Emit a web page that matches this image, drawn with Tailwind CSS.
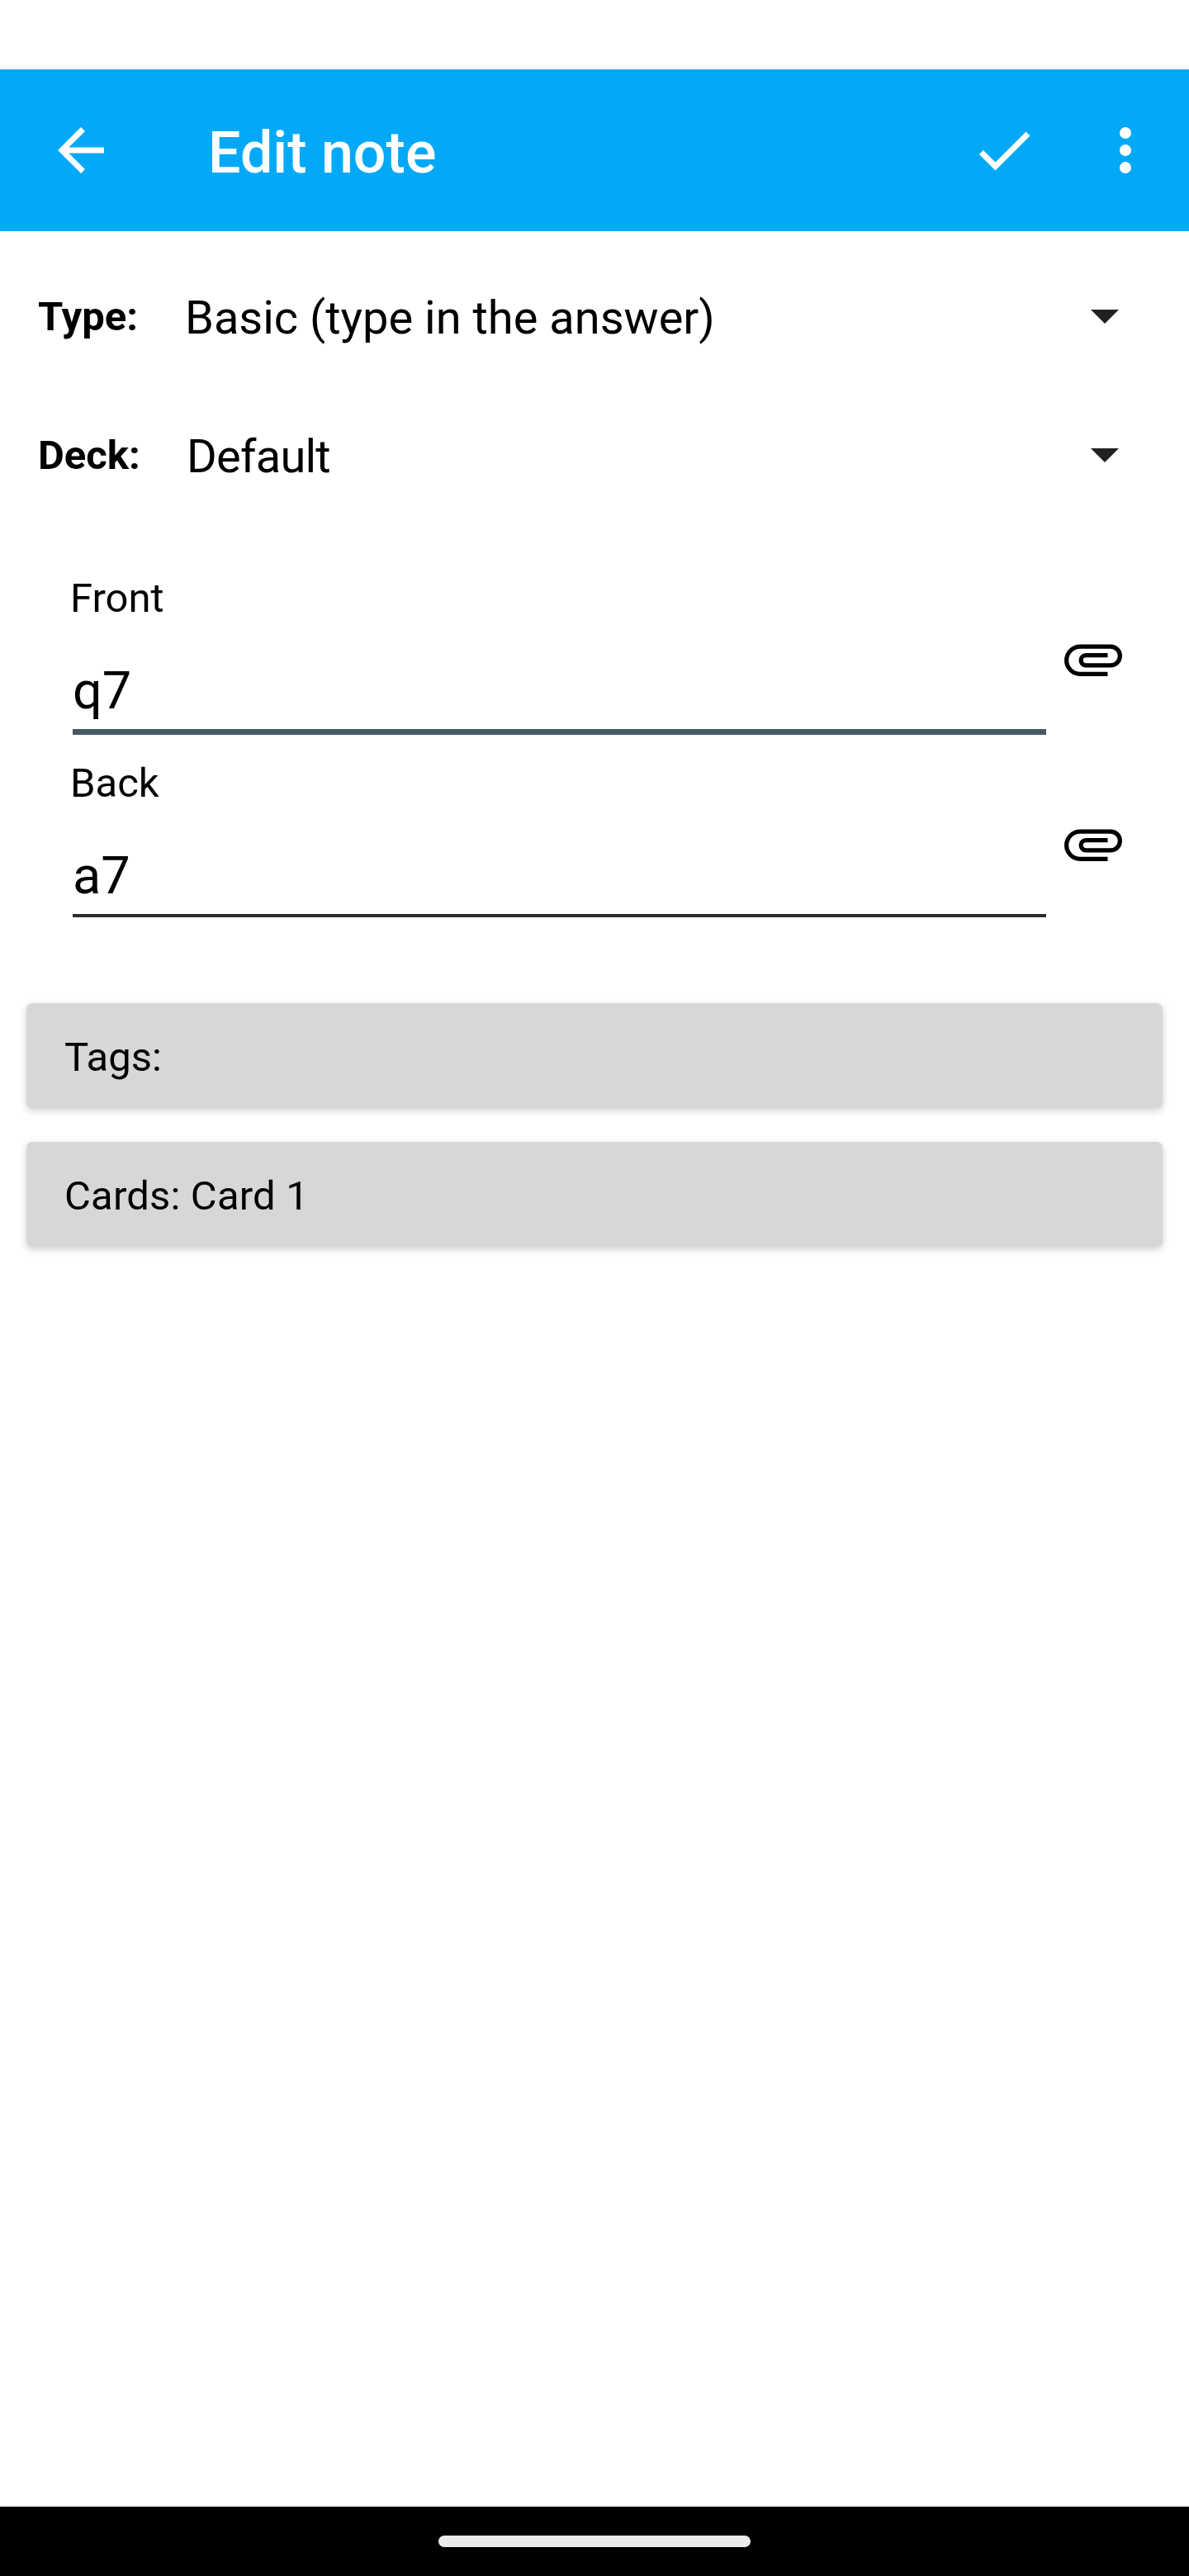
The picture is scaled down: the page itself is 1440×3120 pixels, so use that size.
<!DOCTYPE html>
<html lang="en">
<head>
<meta charset="utf-8">
<title>Edit note</title>
<script src="https://cdn.jsdelivr.net/npm/@tailwindcss/browser@4"></script>
</head>
<body class="bg-white">
<div class="flex h-[3120px] w-[1440px] flex-col bg-white font-['Roboto',sans-serif] text-black">
  <div class="h-[84px]"></div>
  <header class="flex h-[196px] items-center bg-[#03a9f7] pl-14 pr-[35px] text-white">
    <svg class="size-[84px]" viewBox="0 0 24 24" fill="currentColor"><path d="M20 11H7.83l5.59-5.59L12 4l-8 8 8 8 1.41-1.41L7.83 13H20v-2z"/></svg>
    <h1 class="ml-28 flex-1 pt-1.5 text-[70px] leading-[84px] font-medium">Edit note</h1>
    <svg class="size-[84px]" viewBox="0 0 24 24" fill="currentColor"><path d="M9 16.17L4.83 12l-1.42 1.41L9 19 21 7l-1.41-1.41z"/></svg>
    <svg class="ml-[63px] size-[84px]" viewBox="0 0 24 24" fill="currentColor"><circle cx="12" cy="6" r="2"/><circle cx="12" cy="12" r="2"/><circle cx="12" cy="18" r="2"/></svg>
  </header>

  <main class="flex flex-1 flex-col pt-5">
    <div class="flex h-[168px] items-center pr-[85px] pl-[46px]">
      <span class="w-[178px] text-[49px] leading-[60px] font-bold">Type:</span>
      <span class="flex-1 pt-0.5 text-[56px] leading-[66px]">Basic (type in the answer)</span>
      <svg class="mb-px h-[17px] w-[34px]" viewBox="0 0 34 17" fill="#212121"><path d="M0 0h34L17 17z"/></svg>
    </div>
    <div class="flex h-[168px] items-center pr-[85px] pl-[46px]">
      <span class="w-[180px] text-[49px] leading-[60px] font-bold">Deck:</span>
      <span class="flex-1 pt-0.5 text-[56px] leading-[66px] tracking-[-0.75px]">Default</span>
      <svg class="mb-px h-[17px] w-[34px]" viewBox="0 0 34 17" fill="#212121"><path d="M0 0h34L17 17z"/></svg>
    </div>

    <section class="mt-11 flex h-[224px] items-start">
      <div class="ml-[85px] w-[1182px]">
        <div class="text-[49px] leading-[90px]">Front</div>
        <div class="ml-[3px] h-[120px] border-b-[7px] border-[#455a64] pt-5 text-[63px] leading-[93px]">q7</div>
      </div>
      <svg class="mt-[75.5px] ml-[15px] size-[84px]" viewBox="0 0 24 24" fill="none" stroke="#000" stroke-width="1.5"><path d="M17 17.25H7.5a4.75 4.75 0 0 1 0-9.5H18a3.25 3.25 0 0 1 0 6.5H9.5a1.75 1.75 0 0 1 0-3.5H17"/></svg>
    </section>
    <section class="flex h-[224px] items-start">
      <div class="ml-[85px] w-[1182px]">
        <div class="text-[49px] leading-[90px]">Back</div>
        <div class="ml-[3px] h-[117px] border-b-4 border-[#2c2c2c] pt-5 text-[63px] leading-[93px]">a7</div>
      </div>
      <svg class="mt-[75.5px] ml-[15px] size-[84px]" viewBox="0 0 24 24" fill="none" stroke="#000" stroke-width="1.5"><path d="M17 17.25H7.5a4.75 4.75 0 0 1 0-9.5H18a3.25 3.25 0 0 1 0 6.5H9.5a1.75 1.75 0 0 1 0-3.5H17"/></svg>
    </section>

    <div class="mx-8 mt-[87px] flex flex-col gap-[41px] text-[49px]">
      <div class="flex h-[127px] items-center rounded-[7px] bg-[#d6d8d7] pt-1 pl-[46px] shadow-[0_3px_10px_rgba(0,0,0,0.2)]">Tags:</div>
      <div class="flex h-[127px] items-center rounded-[7px] bg-[#d6d8d7] pt-1 pl-[46px] tracking-[0.17px] shadow-[0_3px_10px_rgba(0,0,0,0.2)]">Cards: Card 1</div>
    </div>
  </main>

  <footer class="flex h-[84px] items-center justify-center bg-black">
    <div class="h-3.5 w-[378px] rounded-full bg-[#ebebeb]"></div>
  </footer>
</div>
</body>
</html>
